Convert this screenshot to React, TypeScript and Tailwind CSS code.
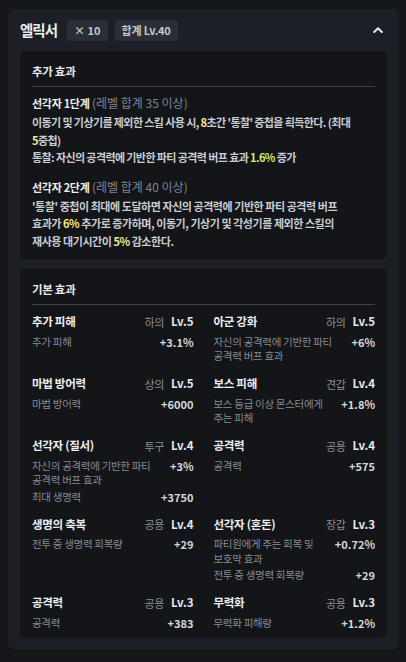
import React from "react";

type Eff = { label: string; value: string };
type Item = { name: string; slot: string; lv: string; effects: Eff[] };

const items: Item[] = [
  { name: "추가 피해", slot: "하의", lv: "Lv.5", effects: [{ label: "추가 피해", value: "+3.1%" }] },
  { name: "아군 강화", slot: "하의", lv: "Lv.5", effects: [{ label: "자신의 공격력에 기반한 파티 공격력 버프 효과", value: "+6%" }] },
  { name: "마법 방어력", slot: "상의", lv: "Lv.5", effects: [{ label: "마법 방어력", value: "+6000" }] },
  { name: "보스 피해", slot: "견갑", lv: "Lv.4", effects: [{ label: "보스 등급 이상 몬스터에게 주는 피해", value: "+1.8%" }] },
  {
    name: "선각자 (질서)",
    slot: "투구",
    lv: "Lv.4",
    effects: [
      { label: "자신의 공격력에 기반한 파티 공격력 버프 효과", value: "+3%" },
      { label: "최대 생명력", value: "+3750" },
    ],
  },
  { name: "공격력", slot: "공용", lv: "Lv.4", effects: [{ label: "공격력", value: "+575" }] },
  { name: "생명의 축복", slot: "공용", lv: "Lv.4", effects: [{ label: "전투 중 생명력 회복량", value: "+29" }] },
  {
    name: "선각자 (혼돈)",
    slot: "장갑",
    lv: "Lv.3",
    effects: [
      { label: "파티원에게 주는 회복 및 보호막 효과", value: "+0.72%" },
      { label: "전투 중 생명력 회복량", value: "+29" },
    ],
  },
  { name: "공격력", slot: "공용", lv: "Lv.3", effects: [{ label: "공격력", value: "+383" }] },
  { name: "무력화", slot: "공용", lv: "Lv.3", effects: [{ label: "무력화 피해량", value: "+1.2%" }] },
];

const Y = ({ children }: { children: React.ReactNode }) => (
  <span className="text-[#fbe88a]">{children}</span>
);
const G = ({ children }: { children: React.ReactNode }) => (
  <span className="text-[#c6ef6f]">{children}</span>
);

function ItemCard({ it }: { it: Item }) {
  return (
    <div className="flex flex-col">
      <div className="flex h-[18px] items-center justify-between">
        <span className="text-[11.5px] font-bold tracking-[-0.3px] text-[#eceef1]">{it.name}</span>
        <span className="flex items-center gap-[7px]">
          <span className="text-[11px] tracking-[-0.3px] text-[#8a8f98]">{it.slot}</span>
          <span className="text-[11.5px] font-bold text-[#e6e8eb]">{it.lv}</span>
        </span>
      </div>
      <div className="mt-[4px] flex flex-col gap-[2px]">
        {it.effects.map((e, i) => (
          <div key={i} className="flex items-start justify-between gap-[8px]">
            <span className="min-w-0 flex-1 break-keep text-[10.5px] leading-[14.5px] tracking-[-0.3px] text-[#868b94]">
              {e.label}
            </span>
            <span className="shrink-0 whitespace-nowrap text-[11px] font-bold leading-[14.5px] text-[#d4d7dc]">
              {e.value}
            </span>
          </div>
        ))}
      </div>
    </div>
  );
}

export default function App() {
  return (
    <div
      className="min-h-[662px] w-[406px] bg-[#15171b] pt-[9px] pl-[8px] pr-[7px] pb-[9px]"
      style={{ fontFamily: '"Noto Sans CJK KR", "Noto Sans", sans-serif' }}
    >
      <div className="rounded-[6px] bg-[#1c1f25] px-3 pb-[11px]">
        <div className="flex h-[42px] items-center">
          <span className="text-[14.5px] font-bold tracking-[-1px] text-[#eceef1]">엘릭서</span>
          <span className="ml-[10px] flex h-[21px] items-center rounded-[3px] bg-[#2a2e36] px-[7px] text-[11px] font-semibold text-[#c3c7ce]">
            × 10
          </span>
          <span className="ml-[7px] flex h-[21px] items-center rounded-[3px] bg-[#2a2e36] px-[7px] text-[11px] font-semibold tracking-[-0.2px] text-[#c3c7ce]">
            합계 Lv.40
          </span>
          <span className="ml-auto mr-[4px] flex items-center">
            <svg width="10" height="6" viewBox="0 0 10 6" fill="none">
              <path d="M1.2 5 L5 1.3 L8.8 5" stroke="#e6e8eb" strokeWidth="2" strokeLinecap="round" strokeLinejoin="round" />
            </svg>
          </span>
        </div>

        <div className="rounded-[5px] bg-[#131519] px-3 pt-[11px] pb-[9px]">
          <div className="text-[11.5px] font-bold leading-[18px] tracking-[-0.3px] text-[#e6e8eb]">추가 효과</div>
          <div className="mt-[6px] h-px bg-[#3b3f47]" />
          <div className="mt-[7px]">
            <div className="text-[11px] leading-[18px]">
              <span className="font-bold tracking-[-0.3px] text-[#eceef1]">선각자 1단계</span>{" "}
              <span className="text-[12px] text-[#80858e]">(레벨 합계 35 이상)</span>
            </div>
            <div className="mt-[2px] break-keep text-[11px] font-semibold leading-[17.5px] tracking-[-0.6px] text-[#c9ccd1]">
              이동기 및 기상기를 제외한 스킬 사용 시, <Y>8</Y>초간 '통찰' 중첩을 획득한다. (최대 <Y>5</Y>중첩)
              <br />
              통찰: 자신의 공격력에 기반한 파티 공격력 버프 효과 <G>1.6%</G> 증가
            </div>
          </div>
          <div className="mt-[11.5px]">
            <div className="text-[11px] leading-[18px]">
              <span className="font-bold tracking-[-0.3px] text-[#eceef1]">선각자 2단계</span>{" "}
              <span className="text-[12px] text-[#80858e]">(레벨 합계 40 이상)</span>
            </div>
            <div className="mt-[2px] text-[11px] font-semibold leading-[17.3px] tracking-[-0.45px] text-[#c9ccd1]">
              <div className="whitespace-nowrap">'통찰' 중첩이 최대에 도달하면 자신의 공격력에 기반한 파티 공격력 버프</div>
              <div className="whitespace-nowrap">
                효과가 <Y>6%</Y> 추가로 증가하며, 이동기, 기상기 및 각성기를 제외한 스킬의
              </div>
              <div className="whitespace-nowrap">
                재사용 대기시간이 <Y>5%</Y> 감소한다.
              </div>
            </div>
          </div>
        </div>

        <div className="mt-[10px] rounded-[5px] bg-[#131519] px-3 pt-[11px] pb-[8px]">
          <div className="text-[11.5px] font-bold leading-[18px] tracking-[-0.3px] text-[#e6e8eb]">기본 효과</div>
          <div className="mt-[6px] h-px bg-[#3b3f47]" />
          <div className="mt-[8px] grid grid-cols-2 gap-x-[20px] gap-y-[11px]">
            {items.map((it, i) => (
              <ItemCard key={i} it={it} />
            ))}
          </div>
        </div>
      </div>
    </div>
  );
}
